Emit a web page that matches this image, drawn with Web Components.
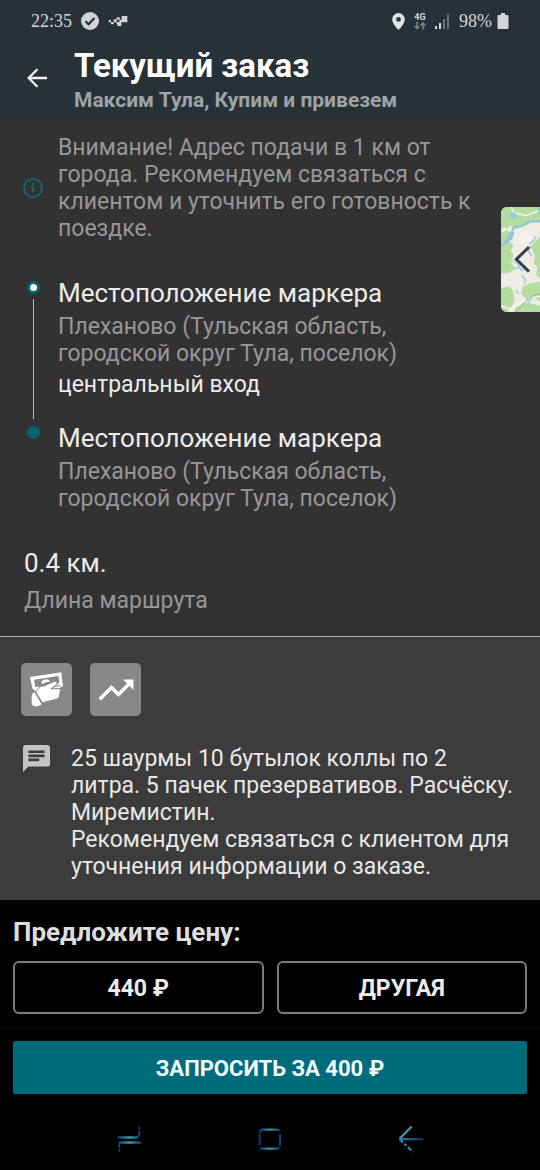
<!DOCTYPE html>
<html lang="ru">
<head>
<meta charset="utf-8">
<meta name="viewport" content="width=device-width, initial-scale=1">
<title>Текущий заказ</title>
<style>
  body {
    margin: 0;
    background: #000;
    color: #e8e8e8;
    font-family: Roboto, "Noto Sans", sans-serif;
    font-size: 23px;
    line-height: 27px;
  }
</style>
</head>
<body>
<order-screen>
  <status-bar slot="top" time="22:35" battery="98%"></status-bar>
  <app-header slot="top" heading="Текущий заказ">Максим Тула, Купим и привезем</app-header>

  <map-peek slot="map"></map-peek>
  <info-note slot="route">Внимание! Адрес подачи в 1 км от города. Рекомендуем связаться с клиентом и уточнить его готовность к поездке.</info-note>
  <route-stop slot="route" start heading="Местоположение маркера">
    Плеханово (Тульская область, городской округ Тула, поселок)
    <span slot="note">центральный вход</span>
  </route-stop>
  <route-stop slot="route" heading="Местоположение маркера">Плеханово (Тульская область, городской округ Тула, поселок)</route-stop>
  <route-length slot="route" value="0.4 км.">Длина маршрута</route-length>

  <order-badge slot="badges" icon="cash"></order-badge>
  <order-badge slot="badges" icon="trend"></order-badge>
  <order-comment slot="details">25 шаурмы 10 бутылок коллы по 2 литра. 5 пачек презервативов. Расчёску. Миремистин.<br>Рекомендуем связаться с клиентом для уточнения информации о заказе.</order-comment>

  <price-panel slot="bottom" heading="Предложите цену:">
    <price-button slot="option">440 ₽</price-button>
    <price-button slot="option">ДРУГАЯ</price-button>
    <price-button slot="submit" primary>ЗАПРОСИТЬ ЗА 400 ₽</price-button>
  </price-panel>
  <system-nav slot="bottom"></system-nav>
</order-screen>

<script>
class BaseElement extends HTMLElement {
  constructor() {
    super();
    this.attachShadow({ mode: 'open' });
  }

  connectedCallback() {
    this.shadowRoot.innerHTML = this.render();
  }

  attr(name) {
    return this.getAttribute(name) || '';
  }
}

class OrderScreen extends BaseElement {
  render() {
    return `
    <style>
      :host {
        display: flex;
        flex-direction: column;
        min-height: 100vh;
      }
      .top {
        background: #273138;
      }
      main {
        flex: 1;
        display: flex;
        flex-direction: column;
        position: relative;
      }
      .route {
        background: #323232;
        padding: 17px 56px 22px 24px;
        border-bottom: 1px solid #b4b4b4;
      }
      .details {
        flex: 1;
        background: #3c3c3c;
        padding: 26px 24px 20px 21px;
      }
      .badges {
        display: flex;
        gap: 18px;
        margin-bottom: 29px;
      }
    </style>
    <div class="top"><slot name="top"></slot></div>
    <main>
      <section class="route"><slot name="route"></slot></section>
      <section class="details">
        <div class="badges"><slot name="badges"></slot></div>
        <slot name="details"></slot>
      </section>
      <slot name="map"></slot>
    </main>
    <slot name="bottom"></slot>
  `;
  }
}

class StatusBar extends BaseElement {
  render() {
    return `
    <style>
      :host {
        display: flex;
        justify-content: space-between;
        align-items: center;
        height: 42px;
        padding: 0 31px;
        color: #d3d6d8;
        font-family: "Liberation Serif", serif;
        font-size: 18px;
        line-height: 22px;
      }
      .group {
        display: flex;
        align-items: center;
        gap: 9px;
      }
      .battery {
        display: flex;
        align-items: center;
        gap: 5px;
      }
      .net {
        display: flex;
        flex-direction: column;
        align-items: center;
        font: bold 9px/9px Roboto, sans-serif;
      }
      svg { display: block; }
    </style>
    <div class="group">
      <span>${this.attr('time')}</span>
      <svg width="18" height="18" viewBox="0 0 18 18"><circle cx="9" cy="9" r="9" fill="#d0d3d4"/><path d="M4.500 9.300l3 3 6-6.200" fill="none" stroke="#273138" stroke-width="2.200"/></svg>
      <svg width="20" height="12" viewBox="0 0 60 36" fill="#d0d3d4"><path d="M2 15h7v7H2zM9 21h8v7H9zM17 13h9v9h-9zM26 21h14v12H28v-6h-2zM26 7h9v7h-9zM41 3h17v19H41zM34 14h7v8h-7z"/></svg>
    </div>
    <div class="group">
      <svg width="13" height="17" viewBox="0 0 13 17"><path fill-rule="evenodd" fill="#e0e3e4" d="M6.500 0A6.300 6.300 0 0 0 .2 6.400C.2 10.800 6.500 17 6.500 17s6.300-6.200 6.300-10.600A6.300 6.300 0 0 0 6.500 0zm0 4a2.400 2.400 0 1 1 0 4.800 2.400 2.400 0 0 1 0-4.800z"/></svg>
      <span class="net">4G
        <svg width="12" height="8" viewBox="0 0 12 8" fill="none" stroke="#7d8589" stroke-width="1.600"><path d="M3 0v6.500M.6 4.200L3 6.700l2.400-2.500M9 7.500V1M6.600 3.500L9 1l2.400 2.500"/></svg>
      </span>
      <svg width="15" height="15" viewBox="0 0 15 15"><path d="M0 12h2v3H0zM4 9h2v6H4z" fill="#d8dbdc"/><path d="M8 5h2v10H8zM12 0h2v15h-2z" fill="#667075"/></svg>
      <span class="battery">
        ${this.attr('battery')}
        <svg width="12" height="16" viewBox="0 0 12 16" fill="#d3d5d6"><path d="M4 0h4v2h2.500q1 0 1 1v12q0 1-1 1h-9q-1 0-1-1V3q0-1 1-1H4z"/></svg>
      </span>
    </div>
  `;
  }
}

class AppHeader extends BaseElement {
  render() {
    return `
    <style>
      :host {
        display: flex;
        align-items: center;
        gap: 17px;
        padding: 3px 16px;
      }
      button {
        width: 41px;
        height: 41px;
        margin-top: -4px;
        padding: 0;
        border: 0;
        background: none;
        display: grid;
        place-items: center;
      }
      h1 {
        margin: 0;
        font-size: 33px;
        line-height: 42px;
        color: #fff;
      }
      p {
        margin: 0;
        font-size: 21px;
        font-weight: bold;
        color: #9ea3a6;
      }
    </style>
    <button aria-label="Назад">
      <svg width="20" height="20" viewBox="0 0 20 20" fill="none" stroke="#eef0f1" stroke-width="2.300"><path d="M20 10H1.800M10.400 1.200L1.600 10l8.800 8.800"/></svg>
    </button>
    <div>
      <h1>${this.attr('heading')}</h1>
      <p><slot></slot></p>
    </div>
  `;
  }
}

class MapPeek extends BaseElement {
  render() {
    return `
    <style>
      /* floats over the route at the right edge */
      :host {
        position: absolute;
        top: 90px;
        right: 0;
      }
      button {
        display: block;
        padding: 0;
        border: 0;
        background: none;
        border-radius: 6px 0 0 6px;
        overflow: hidden;
      }
      svg { display: block; }
    </style>
    <button aria-label="Открыть карту">
      <svg width="39" height="105" viewBox="0 0 117 315">
        <path fill="#efebe5" d="M0 0h117v315H0z"/>
        <g fill="#b5dda0">
          <path d="M0 0h117v48l-22-6-20 14-32 10-16-12-8 12-10-8-9 12z"/>
          <path d="M0 78l16-8 20 10-12 22 14 14-12 20-10-4-16 10z"/>
          <path d="M0 134l24-8 14 18-8 20 12 22-20 12-22 2z"/>
          <path d="M88 118l29-30v128l-12-12 4-24-12-12 6-18z"/>
          <path d="M0 244l24-6 12 14 6 26-10 22-12 15H0z"/>
          <path d="M66 238l26-10 25-4v60l-20-14-20 8-16-18z"/>
          <path d="M46 300l30-14 41 10v19H40z"/>
        </g>
        <path d="M24 66l58 8 20 22-20 28-36-20-14-20z" fill="#f4efe9"/>
        <g fill="none" stroke="#fbfaf4" stroke-width="4">
          <path d="M30 0l10 18 36 8 41-16M0 296l24 10 20-10 38-22 35-6"/>
        </g>
        <g fill="none" stroke="#8bc4de" stroke-width="6">
          <path d="M4 116l22-28 12-26 24-6 24-12 31-2M38 76l-8 20-18 12"/>
          <path d="M84 112l14-12 6-12M88 118l-6 12 10 18" stroke-width="4"/>
          <path d="M34 162l16 6 10 22 14-4M40 184l20-2M62 206l12 12-4 12M76 270l8 14 10-12M44 250l8 8" stroke="#a6cfe7" stroke-width="5"/>
          <path d="M116 0v20" stroke-width="7"/>
        </g>
        <path d="M28 20l14-4 6 12-8 8-12-4z" fill="#8fcbdc"/>
        <path d="M42 315l20-16 10-16 22-16 23-8" fill="none" stroke="#a9a8a4" stroke-width="3"/>
        <path d="M84 120L46 157l38 37" fill="none" stroke="#353f45" stroke-width="9"/>
      </svg>
    </button>
  `;
  }
}

class InfoNote extends BaseElement {
  render() {
    return `
    <style>
      :host {
        display: flex;
        align-items: center;
        gap: 15px;
        color: #979797;
        margin-bottom: 36px;
      }
      svg { flex: none; margin-left: -1px; }
    </style>
    <svg width="20" height="20" viewBox="0 0 20 20"><circle cx="10" cy="10" r="9" fill="none" stroke="#0e6775" stroke-width="2"/><path d="M9 5h2v2H9zM8 8.500h3V14H9v-4H8z" fill="#0e6775"/></svg>
    <div><slot></slot></div>
  `;
  }
}

class RouteStop extends BaseElement {
  render() {
    const isStart = this.hasAttribute('start');
    return `
    <style>
      :host {
        display: grid;
        grid-template-columns: 18px 1fr;
        gap: 16px;
        color: #979797;
      }
      .rail {
        display: flex;
        flex-direction: column;
        align-items: center;
        padding: 3px 0 4px;
      }
      .dot {
        box-sizing: border-box;
        width: 13px;
        height: 13px;
        border-radius: 50%;
        background: ${isStart ? '#fff' : '#05626f'};
        border: 3px solid #05626f;
      }
      .line {
        flex: 1;
        width: 1px;
        margin-top: 5px;
        background: #bdbdbd;
      }
      h2 {
        margin: 0 0 5px;
        font-size: 26px;
        font-weight: normal;
        line-height: 30px;
        color: #ececec;
      }
      .note {
        margin-top: 4px;
        padding-bottom: 25px;
        color: #ececec;
      }
    </style>
    <div class="rail">
      <div class="dot"></div>
      ${isStart ? '<div class="line"></div>' : ''}
    </div>
    <div>
      <h2>${this.attr('heading')}</h2>
      <slot></slot>
      ${isStart ? '<div class="note"><slot name="note"></slot></div>' : ''}
    </div>
  `;
  }
}

class RouteLength extends BaseElement {
  render() {
    return `
    <style>
      :host {
        display: block;
        margin-top: 36px;
        color: #979797;
      }
      .value {
        margin-bottom: 9px;
        font-size: 26px;
        line-height: 30px;
        color: #ececec;
      }
    </style>
    <div class="value">${this.attr('value')}</div>
    <slot></slot>
  `;
  }
}

const badgeIcons = {
  cash: `<svg width="51" height="53" viewBox="0 0 153 159">
      <path fill-rule="evenodd" fill="#fff" d="M27 42L121 28l5 42-18 8-66 6-8-8zM39 50l4 22 66-6 6-9-3-18z"/>
      <path d="M61 59q4-10 15-10 9 0 10 7-12 0-22 7z" fill="#fff"/>
      <path d="M44 87q6-9 10-14 5-4 15-4l32-14q9-1 7 7L93 77l26 0-4 24q-2 6-9 8l-42 10z" fill="#fff" stroke="#888" stroke-width="3"/>
      <path d="M35 91l6-3 21 34-3 5q-12 5-21 2-6-2-6-9V98q0-4 3-7z" fill="#fff"/>
      <path d="M42 87l21 36" stroke="#888" stroke-width="3"/>
      <path d="M88 79l12-8 20-3" fill="none" stroke="#888" stroke-width="3"/>
    </svg>`,
  trend: `<svg width="42" height="42" viewBox="0 0 24 24"><path fill="#fff" d="M16 6l2.290 2.290-4.880 4.880-4-4L2 16.590 3.410 18l6-6 4 4 6.300-6.290L22 12V6z"/></svg>`
};

class OrderBadge extends BaseElement {
  render() {
    return `
    <style>
      :host {
        display: grid;
        place-items: center;
        width: 51px;
        height: 53px;
        border-radius: 5px;
        background: #888;
      }
      svg { display: block; }
    </style>
    ${badgeIcons[this.attr('icon')]}
  `;
  }
}

class OrderComment extends BaseElement {
  render() {
    return `
    <style>
      :host {
        display: flex;
        align-items: flex-start;
        gap: 21px;
        padding-left: 2px;
      }
      svg { flex: none; }
    </style>
    <svg width="27" height="27" viewBox="2 2 20 20"><path fill="#c4c4c4" d="M20 2H4c-1.100 0-1.990.9-1.990 2L2 22l4-4h14c1.100 0 2-.9 2-2V4c0-1.100-.9-2-2-2zM6 9h12v2H6V9zm8 5H6v-2h8v2zm4-6H6V6h12v2z"/></svg>
    <div><slot></slot></div>
  `;
  }
}

class PricePanel extends BaseElement {
  render() {
    return `
    <style>
      :host {
        display: block;
        background: #000;
      }
      .offer {
        padding: 17px 13px 13px;
        border-bottom: 1px solid #0d0d0d;
      }
      h2 {
        margin: 0 0 14px;
        font-size: 26px;
        line-height: 30px;
        color: #dedede;
      }
      .options {
        display: grid;
        grid-template-columns: 1fr 1fr;
        gap: 13px;
      }
      .submit {
        padding: 13px 13px 0;
      }
    </style>
    <div class="offer">
      <h2>${this.attr('heading')}</h2>
      <div class="options"><slot name="option"></slot></div>
    </div>
    <div class="submit"><slot name="submit"></slot></div>
  `;
  }
}

class PriceButton extends BaseElement {
  render() {
    return `
    <style>
      :host { display: block; }
      button {
        display: block;
        width: 100%;
        height: 53px;
        padding: 2px 0 0;
        border: 2px solid #7c7c7c;
        border-radius: 6px;
        background: #000;
        color: #ededed;
        font: bold 23px/27px Roboto, sans-serif;
      }
      :host([primary]) button {
        border: 0;
        border-radius: 2px;
        background: #006b7a;
        color: #f2fbfc;
        font-size: 22px;
      }
    </style>
    <button><slot></slot></button>
  `;
  }
}

class SystemNav extends BaseElement {
  render() {
    return `
    <style>
      :host {
        display: grid;
        grid-template-columns: repeat(3, 1fr);
        padding: 16px 58px 14px;
      }
      button {
        height: 58px;
        padding: 0;
        border: 0;
        background: none;
        display: grid;
        place-items: center;
      }
    </style>
    <button aria-label="Недавние">
      <svg width="26" height="28" viewBox="0 0 78 84" fill="none">
        <defs><linearGradient id="recent"><stop stop-color="#0b3a66"/><stop offset=".5" stop-color="#3a9aa8"/><stop offset="1" stop-color="#0b3a66"/></linearGradient></defs>
        <path d="M5 34h60v7H5zM10 49h66v7H10z" fill="url(#recent)"/>
        <path d="M70 5v8M70 18v9q-1 8-7 9M10 80v-7M10 68v-9q1-7 6-8" stroke="#12518a" stroke-width="5"/>
      </svg>
    </button>
    <button aria-label="Главная">
      <svg width="24" height="24" viewBox="0 0 72 72" fill="none">
        <defs><linearGradient id="home"><stop stop-color="#0a3768"/><stop offset=".5" stop-color="#3d98a5"/><stop offset="1" stop-color="#0a3768"/></linearGradient></defs>
        <path d="M6 18q1-10 8-10h42q6 1 10 3M66 62q-4 3-10 3H6" stroke="url(#home)" stroke-width="7"/>
        <path d="M5 20v34M66 20v38" stroke="#0d3f79" stroke-width="6"/>
      </svg>
    </button>
    <button aria-label="Назад">
      <svg width="26" height="28" viewBox="0 0 78 84" fill="none">
        <defs><linearGradient id="back"><stop stop-color="#2a7fa0"/><stop offset="1" stop-color="#082a5c"/></linearGradient></defs>
        <path d="M4 39h72v7H4z" fill="url(#back)"/>
        <path d="M41 5L5 41" stroke="#3f8f9f" stroke-width="7"/>
        <path d="M5 43l40 38" stroke="#2d83a3" stroke-width="7" stroke-dasharray="14 6 8 6"/>
      </svg>
    </button>
  `;
  }
}

// Register the custom elements
customElements.define("order-screen", OrderScreen);
customElements.define("status-bar", StatusBar);
customElements.define("app-header", AppHeader);
customElements.define("map-peek", MapPeek);
customElements.define("info-note", InfoNote);
customElements.define("route-stop", RouteStop);
customElements.define("route-length", RouteLength);
customElements.define("order-badge", OrderBadge);
customElements.define("order-comment", OrderComment);
customElements.define("price-panel", PricePanel);
customElements.define("price-button", PriceButton);
customElements.define("system-nav", SystemNav);
</script>
</body>
</html>
